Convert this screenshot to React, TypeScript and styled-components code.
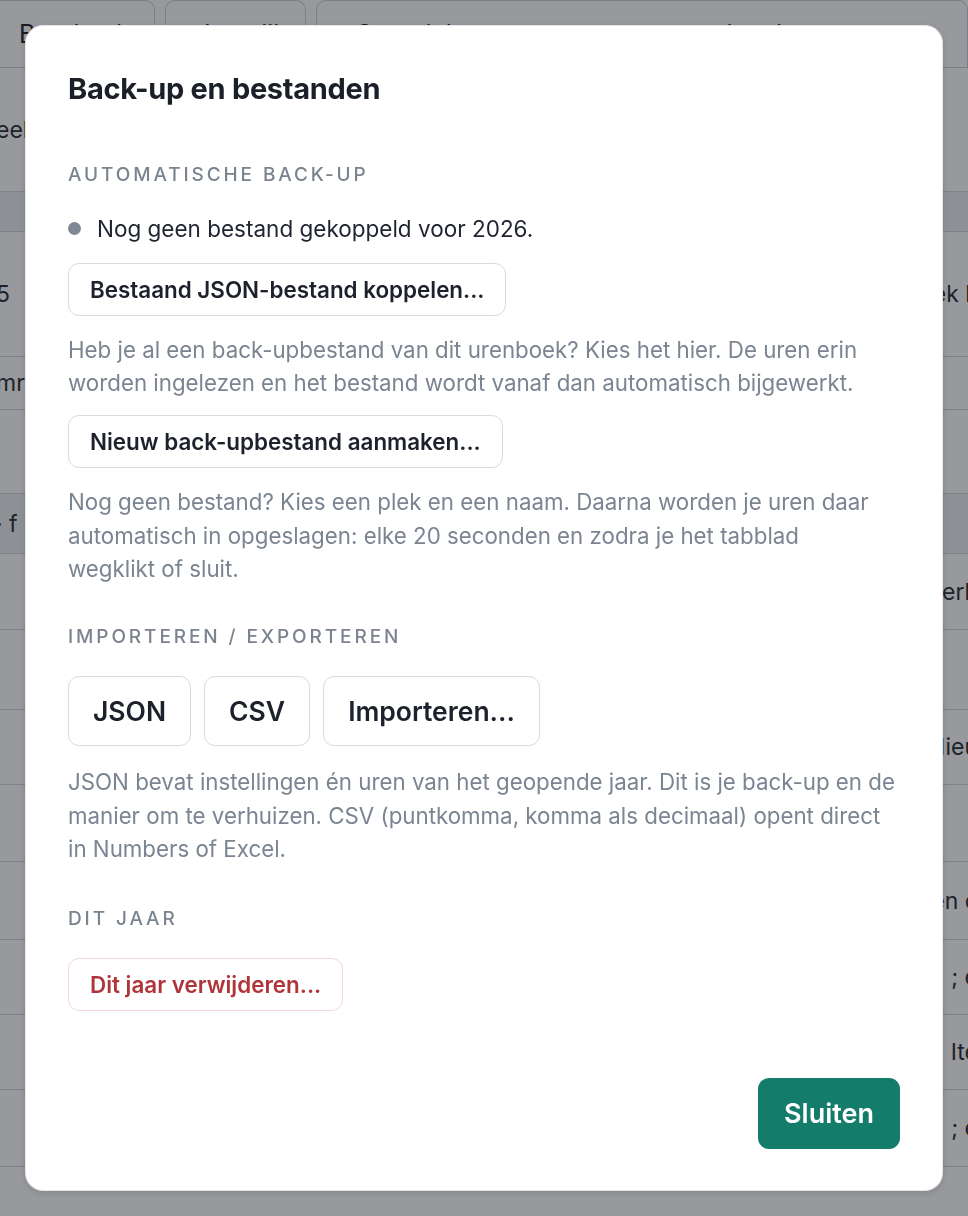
import React from 'react'
import styled, { createGlobalStyle } from 'styled-components'

const GlobalStyle = createGlobalStyle`
  html, body {
    margin: 0;
    padding: 0;
    background: #ffffff;
  }

  body {
    font-family: Inter, "Noto Sans", "Liberation Sans", sans-serif;
    color: #1c212b;
    -webkit-font-smoothing: antialiased;
  }

  * {
    box-sizing: border-box;
  }
`

/* page underneath the dialog */

const Page = styled.div`
  min-height: 100vh;
  overflow: hidden;
  background: #ffffff;
`

const TabBar = styled.div`
  display: flex;
  gap: 10px;
  height: 68px;
  border-bottom: 1px solid #cfd2d6;
  margin-left: -20px;
`

const Tab = styled.div<{ $width: string }>`
  flex: ${p => p.$width};
  display: flex;
  align-items: center;
  padding: 0 38px;
  border: 1px solid #cfd2d6;
  border-bottom: none;
  border-radius: 10px 10px 0 0;
  font-size: 25px;
  color: #222;
  white-space: nowrap;
  overflow: hidden;
`

const Row = styled.div<{ $height: number; $shaded?: boolean }>`
  display: flex;
  align-items: center;
  justify-content: space-between;
  height: ${p => p.$height}px;
  border-bottom: 1px solid #d4d7db;
  background: ${p => (p.$shaded ? '#eef0f3' : '#ffffff')};
  font-size: 23px;
  color: #2a2d33;
  white-space: nowrap;
`

const CellLeft = styled.span`
  margin-left: -4px;
`

const CellRight = styled.span`
  margin-right: -10px;
`

/* dialog */

const Overlay = styled.div`
  position: fixed;
  inset: 0;
  display: flex;
  align-items: center;
  justify-content: center;
  background: rgba(18, 22, 30, 0.44);
`

const Dialog = styled.div`
  width: 918px;
  background: #ffffff;
  border: 1px solid #e3e5e8;
  border-radius: 18px;
  box-shadow: 0 2px 6px rgba(0, 0, 0, 0.12);
  padding: 44px 42px 41px;
  display: flex;
  flex-direction: column;
`

const Title = styled.h2`
  margin: 0 0 15px;
  font-size: 29px;
  line-height: 38px;
  font-weight: 700;
  color: #1a1f28;
  letter-spacing: -0.3px;
`

const Section = styled.section<{ $spaced?: boolean }>`
  display: flex;
  flex-direction: column;
  align-items: flex-start;
  margin-top: ${p => (p.$spaced ? 42 : 40)}px;
`

const Label = styled.h3`
  margin: 0 0 27px;
  font-size: 19px;
  line-height: 24px;
  font-weight: 500;
  letter-spacing: 2.9px;
  text-transform: uppercase;
  color: #7b838f;
`

const Status = styled.div`
  display: flex;
  align-items: center;
  gap: 16px;
  font-size: 22.5px;
  line-height: 30px;
  color: #1f2430;
`

const Dot = styled.span`
  width: 13px;
  height: 13px;
  border-radius: 50%;
  background: #7f8894;
`

const Button = styled.button<{ $size?: 'md' | 'lg'; $tone?: 'default' | 'danger' }>`
  font-family: inherit;
  font-weight: 600;
  background: #ffffff;
  cursor: pointer;
  border-radius: 11px;
  border: 1.5px solid ${p => (p.$tone === 'danger' ? '#f3d6d8' : '#d8dbe0')};
  color: ${p => (p.$tone === 'danger' ? '#b0353a' : '#1c212b')};
  height: ${p => (p.$size === 'lg' ? 70 : 53)}px;
  padding: 0 ${p => (p.$size === 'lg' ? 24 : 21)}px;
  font-size: ${p => (p.$size === 'lg' ? 26.5 : 22.4)}px;
  white-space: nowrap;
`

const Help = styled.p`
  margin: 0;
  font-size: 22.3px;
  line-height: 33.3px;
  color: #7b8491;
`

const Stack = styled.div<{ $gap: number }>`
  display: flex;
  flex-direction: column;
  align-items: flex-start;
  gap: ${p => p.$gap}px;
`

const ButtonRow = styled.div`
  display: flex;
  gap: 13px;
`

const Footer = styled.div`
  display: flex;
  justify-content: flex-end;
  margin-top: 67px;
`

const PrimaryButton = styled.button`
  font-family: inherit;
  font-weight: 600;
  font-size: 27px;
  height: 71px;
  padding: 0 26px;
  border: none;
  border-radius: 11px;
  background: #137c6b;
  color: #ffffff;
  cursor: pointer;
`

const rows: { h: number; shaded?: boolean; left?: string; right?: string }[] = [
  { h: 124, left: 'eek 1 · 29 dec – 4 jan' },
  { h: 40, shaded: true },
  { h: 125, left: '5', right: 'Uren per week k' },
  { h: 53, left: 'mrt' },
  { h: 84 },
  { h: 60, shaded: true, left: '· f' },
  { h: 76, right: 'Verh' },
  { h: 80 },
  { h: 75, right: 'Nieu' },
  { h: 77 },
  { h: 78, right: 'Open c' },
  { h: 75, right: '; e' },
  { h: 75, right: 'Ite' },
  { h: 77, right: '; e' },
  { h: 60 },
]

const App = () => (
  <>
    <GlobalStyle />
    <Page>
      <TabBar>
        <Tab $width="0 0 175px">Berekening</Tab>
        <Tab $width="0 0 141px">Instellingen</Tab>
        <Tab $width="1">Overzicht en rapport per maand en het</Tab>
      </TabBar>
      {rows.map((r, i) => (
        <Row key={i} $height={r.h} $shaded={r.shaded}>
          <CellLeft>{r.left}</CellLeft>
          <CellRight>{r.right}</CellRight>
        </Row>
      ))}
    </Page>

    <Overlay>
      <Dialog role="dialog" aria-labelledby="backup-title">
        <Title id="backup-title">Back-up en bestanden</Title>

        <Section>
          <Label>Automatische back-up</Label>
          <Status>
            <Dot />
            Nog geen bestand gekoppeld voor 2026.
          </Status>
          <Stack $gap={17} style={{ marginTop: 19 }}>
            <Button>Bestaand JSON-bestand koppelen...</Button>
            <Help>
              Heb je al een back-upbestand van dit urenboek? Kies het hier. De uren erin
              worden ingelezen en het bestand wordt vanaf dan automatisch bijgewerkt.
            </Help>
          </Stack>
          <Stack $gap={17} style={{ marginTop: 16 }}>
            <Button>Nieuw back-upbestand aanmaken...</Button>
            <Help>
              Nog geen bestand? Kies een plek en een naam. Daarna worden je uren daar
              automatisch in opgeslagen: elke 20 seconden en zodra je het tabblad
              <br />
              wegklikt of sluit.
            </Help>
          </Stack>
        </Section>

        <Section>
          <Label>Importeren / exporteren</Label>
          <Stack $gap={19}>
            <ButtonRow>
              <Button $size="lg">JSON</Button>
              <Button $size="lg">CSV</Button>
              <Button $size="lg">Importeren...</Button>
            </ButtonRow>
            <Help>
              JSON bevat instellingen én uren van het geopende jaar. Dit is je back-up en de
              manier om te verhuizen. CSV (puntkomma, komma als decimaal) opent direct
              in Numbers of Excel.
            </Help>
          </Stack>
        </Section>

        <Section $spaced>
          <Label>Dit jaar</Label>
          <Button $tone="danger">Dit jaar verwijderen...</Button>
        </Section>

        <Footer>
          <PrimaryButton>Sluiten</PrimaryButton>
        </Footer>
      </Dialog>
    </Overlay>
  </>
)

export default App
